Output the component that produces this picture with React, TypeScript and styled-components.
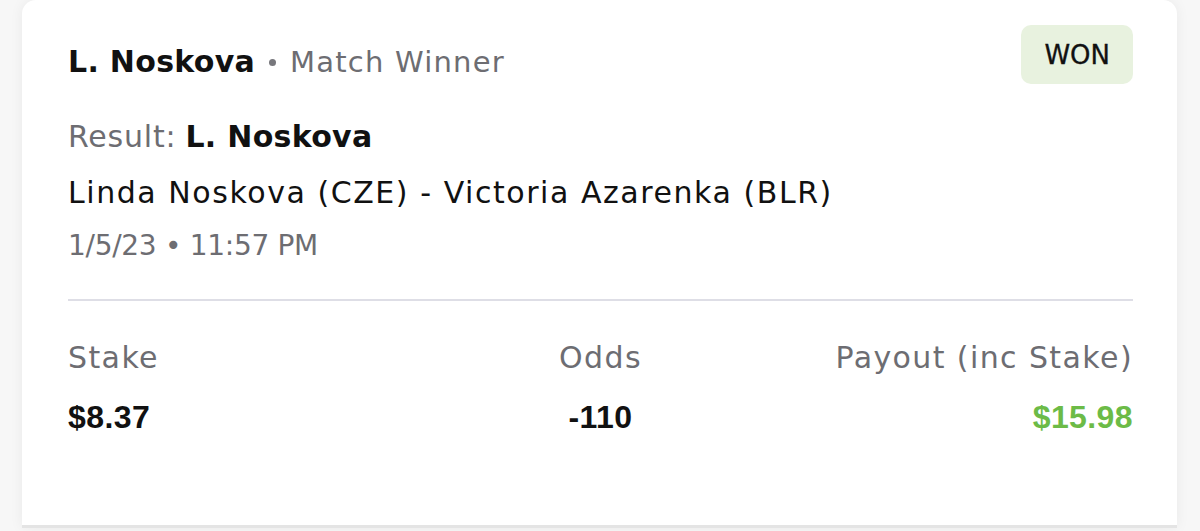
import React from 'react';
import styled, { createGlobalStyle } from 'styled-components';

const GlobalStyle = createGlobalStyle`
  html, body {
    margin: 0;
    padding: 0;
    background: #f6f6f6;
  }
  body {
    font-family: "DejaVu Sans", "Liberation Sans", sans-serif;
  }
`;

const Page = styled.div`
  width: 1200px;
  height: 531px;
  padding: 0 23px 0 22px;
  box-sizing: border-box;
  background: #f7f7f7;
`;

const Card = styled.div`
  height: 528px;
  box-sizing: border-box;
  background: #ffffff;
  border-radius: 14px 14px 0 0;
  border-bottom: 3px solid #e4e4e4;
  box-shadow: 0 0 14px rgba(0, 0, 0, 0.06);
  padding: 25px 44px 0 46px;
  display: flex;
  flex-direction: column;
`;

const HeaderRow = styled.div`
  display: flex;
  justify-content: space-between;
  align-items: flex-start;
`;

const Title = styled.div`
  margin-top: 19px;
  display: flex;
  align-items: center;
  gap: 14px;
  line-height: 36px;
`;

const Strong = styled.span`
  font-weight: 700;
  color: #111111;
  font-size: 30px;
  letter-spacing: 0.3px;
`;

const Muted = styled.span<{ $size?: number; $spacing?: number }>`
  color: #6d6d72;
  font-weight: 400;
  font-size: ${(p) => p.$size ?? 30}px;
  letter-spacing: ${(p) => p.$spacing ?? 1}px;
`;

const Dot = styled.span`
  width: 7px;
  height: 7px;
  border-radius: 50%;
  background: #77777c;
  display: inline-block;
`;

const Badge = styled.div`
  background: #e8f2df;
  border-radius: 10px;
  height: 59px;
  padding: 0 23px;
  display: flex;
  align-items: center;
  font-size: 26px;
  color: #111111;
  -webkit-text-stroke: 0.3px #111111;
`;

const Line = styled.div<{ $top: number }>`
  margin-top: ${(p) => p.$top}px;
  font-size: 30px;
  line-height: 36px;
  color: #111111;
  display: flex;
  align-items: baseline;
  gap: 9px;
  letter-spacing: 1.55px;
`;

const Divider = styled.hr`
  margin: 35px 0 0;
  border: none;
  height: 2px;
  background: #dedee6;
`;

const Stats = styled.div`
  margin-top: 39px;
  display: grid;
  grid-template-columns: 1fr auto 1fr;
  row-gap: 18px;
`;

const Cell = styled.div<{ $align: 'left' | 'center' | 'right' }>`
  text-align: ${(p) => p.$align};
  line-height: 36px;
`;

const Label = styled.span`
  color: #6d6d72;
  font-size: 30px;
  letter-spacing: 1.4px;
`;

const Value = styled.span<{ $green?: boolean }>`
  font-family: "Liberation Sans", Arial, sans-serif;
  font-weight: 700;
  font-size: 32px;
  letter-spacing: 0.4px;
  color: ${(p) => (p.$green ? '#6cbb47' : '#111111')};
`;

export default function App() {
  return (
    <>
      <GlobalStyle />
      <Page>
        <Card>
          <HeaderRow>
            <Title>
              <Strong>L. Noskova</Strong>
              <Dot />
              <Muted $size={29} $spacing={1.2}>Match Winner</Muted>
            </Title>
            <Badge>WON</Badge>
          </HeaderRow>
          <Line $top={35}>
            <Muted $spacing={0.8}>Result:</Muted>
            <Strong>L. Noskova</Strong>
          </Line>
          <Line $top={20}>Linda Noskova (CZE) - Victoria Azarenka (BLR)</Line>
          <Line $top={17}>
            <Muted $size={28} $spacing={-0.3}>1/5/23 • 11:57 PM</Muted>
          </Line>
          <Divider />
          <Stats>
            <Cell $align="left"><Label>Stake</Label></Cell>
            <Cell $align="center"><Label>Odds</Label></Cell>
            <Cell $align="right"><Label>Payout (inc Stake)</Label></Cell>
            <Cell $align="left"><Value>$8.37</Value></Cell>
            <Cell $align="center"><Value>-110</Value></Cell>
            <Cell $align="right"><Value $green>$15.98</Value></Cell>
          </Stats>
        </Card>
      </Page>
    </>
  );
}
